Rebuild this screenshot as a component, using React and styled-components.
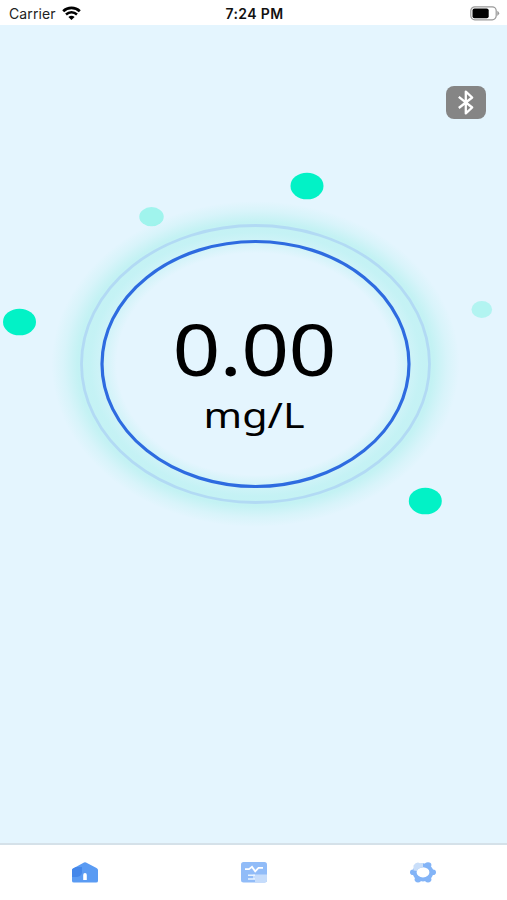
import React from "react";
import styled, { createGlobalStyle } from "styled-components";

const backgroundColour = "#e4f5fe";
const ringColour = "#2e6be0";
const outerRingColour = "#b2daf4";
const dotColour = "#02f2c6";

const statusBarHeightPx = "25";
const tabBarHeightPx = "57";

const GlobalStyle = createGlobalStyle`
    body {
        margin: 0;
        font-family: Inter, "Liberation Sans", sans-serif;
        color: #000;
    }
`;

const Screen = styled.div`
    display: flex;
    flex-direction: column;
    height: 100vh;
    overflow: hidden;
    background: ${backgroundColour};
`;

const StatusBar = styled.header`
    display: grid;
    grid-template-columns: 1fr auto 1fr;
    align-items: center;
    box-sizing: border-box;
    flex: none;
    height: ${statusBarHeightPx}px;
    padding: 2px 7px 0 9px;
    background: #fff;
    font-size: 14px;
    line-height: 20px;
`;

const Carrier = styled.div`
    display: flex;
    align-items: center;
    gap: 6px;
    color: #222;
    letter-spacing: 0.1px;
`;

const Time = styled.div`
    font-weight: 600;
    font-size: 14px;
    letter-spacing: 0.4px;
    color: #111;
`;

const BatterySlot = styled.div`
    display: flex;
    justify-content: flex-end;
`;

const Main = styled.main`
    position: relative;
    flex: 1;
    display: flex;
    flex-direction: column;
`;

const Toolbar = styled.div`
    display: flex;
    justify-content: flex-end;
    padding: 61px 21px 0 0;
`;

const BluetoothButton = styled.button`
    position: relative;
    z-index: 1;
    display: flex;
    align-items: center;
    justify-content: center;
    width: 40px;
    height: 33px;
    padding: 0;
    border: 0;
    border-radius: 8px;
    background: #858585;
`;

const GaugeDrawing = styled.svg`
    position: absolute;
    top: 0;
    left: 0;
`;

const Reading = styled.div`
    position: relative;
    display: flex;
    flex-direction: column;
    align-items: center;
    padding: 187px 0 0 1px;
    font-family: "Noto Sans", Inter, sans-serif;
    transform: scaleX(1.18);
`;

const Value = styled.div`
    font-size: 71px;
    line-height: 85px;
    letter-spacing: -0.6px;
`;

const Unit = styled.div`
    margin-top: 3px;
    font-size: 35px;
    line-height: 42px;
`;

const TabBar = styled.nav`
    display: grid;
    grid-template-columns: repeat(3, 1fr);
    box-sizing: border-box;
    flex: none;
    height: ${tabBarHeightPx}px;
    border-top: 2px solid #d5e1e9;
    background: #fff;
`;

const Tab = styled.a`
    display: flex;
    justify-content: center;
    padding-top: 17px;
`;

const dots = [
    { x: 307, y: 161, rx: 16.5, ry: 13.3, opacity: 1 },
    { x: 151.5, y: 191.7, rx: 12.2, ry: 9.6, opacity: 0.3 },
    { x: 19.5, y: 297, rx: 16.5, ry: 13.3, opacity: 1 },
    { x: 481.8, y: 284.5, rx: 10.3, ry: 8.5, opacity: 0.22 },
    { x: 425.3, y: 476, rx: 16.5, ry: 13.3, opacity: 1 },
];

const WifiIcon = () => (
    <svg width="19" height="15" viewBox="0 0 19 15" fill="none" stroke="#000">
        <path d="M1.2 5.2C5.7.8 13.3.8 17.8 5.2" strokeWidth="2.7" />
        <path d="M4 8.5C7.2 5.5 11.8 5.5 15 8.5" strokeWidth="2.5" />
        <path d="M6.4 11Q9.5 8.4 12.6 11L9.5 14Z" fill="#000" stroke="none" />
    </svg>
);

const BatteryIcon = () => (
    <svg width="30" height="15" viewBox="0 0 30 15">
        <rect x="0.8" y="0.8" width="25.4" height="13" rx="4" fill="#fff" stroke="#999" strokeWidth="1.2" />
        <rect x="2.5" y="2.5" width="16.2" height="9.7" rx="2" fill="#000" />
        <path d="M27.3 4.8Q31 7.3 27.3 9.9Z" fill="#999" />
    </svg>
);

const BluetoothIcon = () => (
    <svg width="18" height="27" viewBox="0 0 18 27" fill="none" stroke="#fff" strokeWidth="2.3">
        <path d="M1.8 7.8L15.2 18.5L8.8 24.4V2.6L15.2 8.5L1.8 19" strokeLinejoin="round" />
    </svg>
);

const HomeIcon = () => (
    <svg width="26" height="21" viewBox="0 0 26 21">
        <path d="M1.5 6.2L12 .6Q13 .1 14 .6L24.5 6Q26 6.8 26 8V19Q26 20.5 24 20.5H2Q0 20.5 0 19V8Q0 6.9 1.5 6.2Z" fill="#5a9bf3" />
        <path d="M0 8Q0 6.9 1.5 6.2L4 5H10V11Q9 14.5 5 15H0Z" fill="#4487ea" />
        <path d="M11.2 18V13Q11.2 11 13 11Q14.8 11 14.8 13V18Z" fill="#fff" />
    </svg>
);

const RecordsIcon = () => (
    <svg width="26" height="21" viewBox="0 0 26 21">
        <rect width="26" height="20.5" rx="2.5" fill="#91bcf8" />
        <path d="M12 12.5H26V18Q26 20.5 23.5 20.5H14V17H12Z" fill="#c5dcfb" />
        <path d="M4 7.2H8L11 4.9L14.2 9.3L17.5 5.8H22" fill="none" stroke="#fff" strokeWidth="1.8" />
        <path d="M7 13.2H14M7 17H14" stroke="#e8f3ff" strokeWidth="1.6" />
    </svg>
);

const SettingsIcon = () => (
    <svg width="26" height="21" viewBox="0 0 26 21">
        <ellipse cx="13" cy="10.3" rx="8.4" ry="7.1" fill="none" stroke="#83b4f7" strokeWidth="4" />
        <g fill="#83b4f7">
            <ellipse cx="3" cy="10.3" rx="3" ry="2.8" />
            <ellipse cx="23" cy="10.3" rx="3" ry="2.8" />
            <ellipse cx="18" cy="3" rx="3.4" ry="2.8" />
            <ellipse cx="8" cy="17.6" rx="3.4" ry="2.8" />
            <ellipse cx="18" cy="17.6" rx="3.4" ry="2.8" />
        </g>
        <path d="M3.5 8.5V3.5Q6.5-.8 10 1.2L13 1V5.4Q8.500 5.500 7 9Z" fill="#c9def9" />
    </svg>
);

const Gauge = () => (
    <GaugeDrawing width="507" height="560" viewBox="0 0 507 560">
        <defs>
            <radialGradient id="glow">
                <stop offset="0.68" stopColor="#9aeee2" stopOpacity="0" />
                <stop offset="0.75" stopColor="#9aeee8" stopOpacity="0.27" />
                <stop offset="0.81" stopColor="#9aeee8" stopOpacity="0.42" />
                <stop offset="0.87" stopColor="#9aeee6" stopOpacity="0.44" />
                <stop offset="0.94" stopColor="#9aeee6" stopOpacity="0.16" />
                <stop offset="1" stopColor="#9aeee2" stopOpacity="0" />
            </radialGradient>
        </defs>
        <ellipse cx="255.5" cy="339" rx="204" ry="163" fill="url(#glow)" />
        <ellipse cx="255.5" cy="339" rx="174" ry="138.5" fill="none" stroke={outerRingColour} strokeWidth="2.8" />
        <ellipse cx="255.5" cy="339" rx="153.5" ry="122.5" fill="none" stroke={ringColour} strokeWidth="3.2" />
        {dots.map(({ x, y, rx, ry, opacity }) => (
            <ellipse key={x} cx={x} cy={y} rx={rx} ry={ry} fill={dotColour} fillOpacity={opacity} />
        ))}
    </GaugeDrawing>
);

const App = () => (
    <>
        <GlobalStyle />
        <Screen>
            <StatusBar>
                <Carrier>
                    Carrier
                    <WifiIcon />
                </Carrier>
                <Time>7:24 PM</Time>
                <BatterySlot>
                    <BatteryIcon />
                </BatterySlot>
            </StatusBar>

            <Main>
                <Gauge />
                <Toolbar>
                    <BluetoothButton aria-label="Bluetooth">
                        <BluetoothIcon />
                    </BluetoothButton>
                </Toolbar>
                <Reading>
                    <Value>0.00</Value>
                    <Unit>mg/L</Unit>
                </Reading>
            </Main>

            <TabBar>
                <Tab>
                    <HomeIcon />
                </Tab>
                <Tab>
                    <RecordsIcon />
                </Tab>
                <Tab>
                    <SettingsIcon />
                </Tab>
            </TabBar>
        </Screen>
    </>
);

export default App;
